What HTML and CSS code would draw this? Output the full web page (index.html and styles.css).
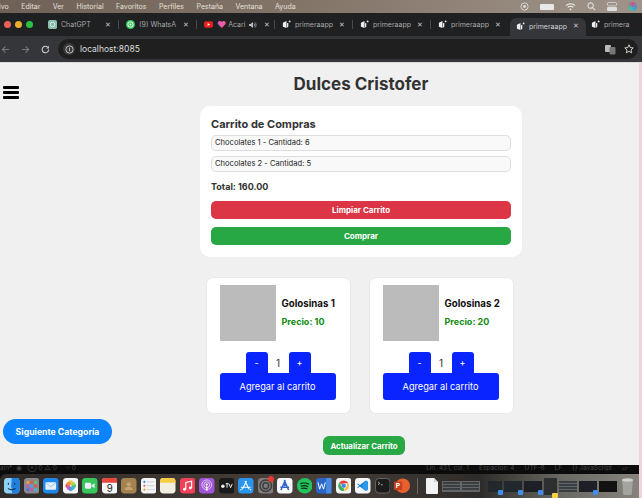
FILE: index.html
```html
<!DOCTYPE html>
<html lang="en">

<head>
    <meta charset="UTF-8">
    <meta name="viewport" content="width=device-width, initial-scale=1.0">
    <title>Dulces Cristofer</title>
    <link rel="stylesheet" href="styles.css">
</head>

<body>
    <div class="menubar">
        <div class="menu-left">
            <span class="menu-first">ivo</span><span>Editar</span><span>Ver</span><span>Historial</span><span>Favoritos</span><span>Perfiles</span><span>Pestaña</span><span>Ventana</span><span>Ayuda</span>
        </div>
        <div class="menu-right">
            <svg width="9" height="9" viewBox="0 0 10 10"><circle cx="5" cy="5" r="4" fill="none" stroke="#ddd"/><circle cx="5" cy="5" r="1.6" fill="#ddd"/></svg>
            <span class="battery"></span>
            <svg width="11" height="9" viewBox="0 0 12 10"><path d="M1 4a7 7 0 0 1 10 0M3 6a4 4 0 0 1 6 0" fill="none" stroke="#eee" stroke-width="1.2"/><circle cx="6" cy="8.3" r="1" fill="#eee"/></svg>
            <svg width="9" height="9" viewBox="0 0 10 10"><circle cx="4" cy="4" r="3" fill="none" stroke="#ddd" stroke-width="1.2"/><path d="M6.2 6.2 9 9" stroke="#ddd" stroke-width="1.2"/></svg>
            <svg width="10" height="9" viewBox="0 0 10 9"><rect x="0.5" y="0.5" width="9" height="3.4" rx="1" fill="none" stroke="#ddd" stroke-width=".8"/><rect x="0" y="5" width="10" height="4" rx="1" fill="#ddd"/></svg>
            <span class="siri"></span>
        </div>
    </div>

    <div class="tabbar">
        <div class="lights"><span class="light red"></span><span class="light yellow"></span><span class="light green"></span></div>
        <div class="tab tab-sep">
            <svg class="fav" viewBox="0 0 10 10"><rect width="10" height="10" rx="2" fill="#86bdab"/><circle cx="5" cy="5" r="2.6" fill="none" stroke="#dcebe5" stroke-width="1"/></svg>
            <span class="tab-name">ChatGPT</span><span class="tab-x">✕</span>
        </div>
        <div class="tab tab-sep">
            <svg class="fav" viewBox="0 0 10 10"><circle cx="5" cy="5" r="5" fill="#34c759"/><circle cx="5" cy="5" r="3" fill="none" stroke="#fff" stroke-width="1"/><circle cx="5" cy="5" r="1.2" fill="#fff"/></svg>
            <span class="tab-name">(9) WhatsA</span><span class="tab-x">✕</span>
        </div>
        <div class="tab tab-sep">
            <svg class="fav" viewBox="0 0 10 10"><rect y="1.5" width="10" height="7" rx="2" fill="#e8201c"/><path d="M4 3.4 6.8 5 4 6.6z" fill="#fff"/></svg>
            <span class="heart">♥</span><span class="tab-short">Acari</span>
            <svg class="speaker" width="8" height="8" viewBox="0 0 8 8"><path d="M0 3h1.5L4 1v6L1.5 5H0z" fill="#bbb"/><path d="M5 2.5a2 2 0 0 1 0 3M6 1.5a3.4 3.4 0 0 1 0 5" fill="none" stroke="#bbb" stroke-width=".7"/></svg>
            <span class="tab-x">✕</span>
        </div>
        <div class="tab tab-sep">
            <svg class="fav" viewBox="0 0 10 10"><path d="M1 3l4-2v8L1 7.5zM5.6 3.5 7 3v4.5l-1.4 1z" fill="#eee"/><circle cx="8.5" cy="1.6" r="1" fill="#eee"/></svg>
            <span class="tab-name">primeraapp</span><span class="tab-x">✕</span>
        </div>
        <div class="tab tab-sep">
            <svg class="fav" viewBox="0 0 10 10"><path d="M1 3l4-2v8L1 7.5zM5.6 3.5 7 3v4.5l-1.4 1z" fill="#eee"/><circle cx="8.5" cy="1.6" r="1" fill="#eee"/></svg>
            <span class="tab-name">primeraapp</span><span class="tab-x">✕</span>
        </div>
        <div class="tab">
            <svg class="fav" viewBox="0 0 10 10"><path d="M1 3l4-2v8L1 7.5zM5.6 3.5 7 3v4.5l-1.4 1z" fill="#eee"/><circle cx="8.5" cy="1.6" r="1" fill="#eee"/></svg>
            <span class="tab-name">primeraapp</span><span class="tab-x">✕</span>
        </div>
        <div class="tab tab-active">
            <svg class="fav" viewBox="0 0 10 10"><path d="M1 3l4-2v8L1 7.5zM5.6 3.5 7 3v4.5l-1.4 1z" fill="#eee"/><circle cx="8.5" cy="1.6" r="1" fill="#eee"/></svg>
            <span class="tab-name">primeraapp</span><span class="tab-x">✕</span>
        </div>
        <div class="tab tab-last">
            <svg class="fav" viewBox="0 0 10 10"><path d="M1 3l4-2v8L1 7.5zM5.6 3.5 7 3v4.5l-1.4 1z" fill="#eee"/><circle cx="8.5" cy="1.6" r="1" fill="#eee"/></svg>
            <span class="tab-name">primera</span>
        </div>
    </div>

    <div class="toolbar">
        <svg class="nav" width="9" height="9" viewBox="0 0 10 10"><path d="M9 5H1.5M5 1.5 1.5 5 5 8.5" fill="none" stroke="#777" stroke-width="1.2"/></svg>
        <svg class="nav" width="9" height="9" viewBox="0 0 10 10"><path d="M1 5h7.5M5 1.5 8.5 5 5 8.5" fill="none" stroke="#777" stroke-width="1.2"/></svg>
        <svg class="nav" width="9" height="9" viewBox="0 0 10 10"><path d="M8.5 5a3.6 3.6 0 1 1-1-2.5" fill="none" stroke="#ccc" stroke-width="1.2"/><path d="M8.8 0.8v3h-3z" fill="#ccc"/></svg>
        <div class="address">
            <span class="addr-info"><svg width="9" height="9" viewBox="0 0 10 10"><circle cx="5" cy="5" r="4" fill="none" stroke="#ccc"/><path d="M5 3v4" stroke="#ccc"/></svg></span>
            <span class="addr-url">localhost:8085</span>
            <svg class="addr-translate" width="11" height="11" viewBox="0 0 11 11"><rect x="0" y="1" width="6" height="7" rx="1" fill="#bbb"/><rect x="4.5" y="3" width="6" height="7.5" rx="1" fill="#777"/></svg>
            <svg width="10" height="10" viewBox="0 0 12 12"><path d="M6 1l1.5 3.3 3.6.4-2.7 2.4.8 3.5L6 8.8 2.8 10.6l.8-3.5L.9 4.7l3.6-.4z" fill="none" stroke="#ddd" stroke-width="1.1"/></svg>
        </div>
    </div>

    <div class="page">
        <button class="hamburger" aria-label="Menu"><span></span><span></span><span></span></button>

        <main class="content">
            <h1 class="site-title">Dulces Cristofer</h1>

            <section class="cart">
                <h2 class="cart-title">Carrito de Compras</h2>
                <div class="cart-item">Chocolates 1 - Cantidad: 6</div>
                <div class="cart-item">Chocolates 2 - Cantidad: 5</div>
                <p class="cart-total">Total: 160.00</p>
                <button class="btn-wide btn-red">Limpiar Carrito</button>
                <button class="btn-wide btn-green">Comprar</button>
            </section>

            <section class="products">
                <article class="product">
                    <div class="product-top">
                        <div class="product-img"></div>
                        <div>
                            <h3 class="product-name">Golosinas 1</h3>
                            <p class="product-price">Precio: 10</p>
                        </div>
                    </div>
                    <div class="qty">
                        <button class="qty-btn">-</button><span class="qty-val">1</span><button class="qty-btn">+</button>
                    </div>
                    <button class="add-btn">Agregar al carrito</button>
                </article>
                <article class="product">
                    <div class="product-top">
                        <div class="product-img"></div>
                        <div>
                            <h3 class="product-name">Golosinas 2</h3>
                            <p class="product-price">Precio: 20</p>
                        </div>
                    </div>
                    <div class="qty">
                        <button class="qty-btn">-</button><span class="qty-val">1</span><button class="qty-btn">+</button>
                    </div>
                    <button class="add-btn">Agregar al carrito</button>
                </article>
            </section>

            <button class="update-btn">Actualizar Carrito</button>
        </main>

        <button class="next-btn">Siguiente Categoría</button>
    </div>

    <div class="statusbar">
        <span class="status-left">ain* &nbsp;◉ &nbsp; ⊗ 0 △ 0 &nbsp; &nbsp; ⑂ 0</span>
        <span class="status-right"><span>Lín. 431, col. 1</span><span>Espacios: 4</span><span>UTF-8</span><span>LF</span><span>{} JavaScript</span><span>▱</span></span>
    </div>

    <div class="dock">
        <svg class="app on" viewBox="0 0 16 16"><rect width="16" height="16" rx="3.5" fill="#8fd0f5"/><path d="M8 0h4.500A3.500 3.500 0 0 1 16 3.500v9a3.500 3.500 0 0 1-3.500 3.500H8.500Q6.500 8 8 0z" fill="#1f7fe0"/><path d="M4.500 5v2M11 5v2M4 11q4 2.500 8 0" fill="none" stroke="#123" stroke-width="1"/></svg>
        <svg class="app" viewBox="0 0 16 16"><rect width="16" height="16" rx="3.500" fill="#8b8b8b"/><rect x="2.500" y="3" width="3" height="3" fill="#e8a23c"/><rect x="6.500" y="3" width="3" height="3" fill="#e0584c"/><rect x="10.500" y="3" width="3" height="3" fill="#5cc46a"/><rect x="2.500" y="6.800" width="3" height="3" fill="#b65fd0"/><rect x="6.500" y="6.800" width="3" height="3" fill="#4a9fe8"/><rect x="10.500" y="6.800" width="3" height="3" fill="#e0584c"/><rect x="2.500" y="10.600" width="3" height="3" fill="#4a6fe8"/><rect x="6.500" y="10.600" width="3" height="3" fill="#d04fa8"/><rect x="10.500" y="10.600" width="3" height="3" fill="#3cb8c8"/></svg>
        <svg class="app" viewBox="0 0 16 16"><rect width="16" height="16" rx="3.500" fill="#1e88ea"/><rect x="2.500" y="4.500" width="11" height="7.500" rx="1" fill="#e6f0fa"/><path d="M2.800 5 8 9l5.200-4" fill="none" stroke="#8ab4dc" stroke-width=".8"/></svg>
        <svg class="app" viewBox="0 0 16 16"><rect width="16" height="16" rx="3.500" fill="#f5f5f5"/><circle cx="8" cy="4.800" r="2.400" fill="#f5c23c"/><circle cx="11.200" cy="8" r="2.400" fill="#5cc46a"/><circle cx="8" cy="11.200" r="2.400" fill="#4a9fe8"/><circle cx="4.800" cy="8" r="2.400" fill="#ee5a4f"/><circle cx="10.200" cy="5.800" r="2" fill="#b4d24c"/><circle cx="5.800" cy="5.800" r="2" fill="#f08a3c"/><circle cx="5.800" cy="10.200" r="2" fill="#b65fd0"/><circle cx="10.200" cy="10.200" r="2" fill="#3cb8c8"/></svg>
        <svg class="app" viewBox="0 0 16 16"><rect width="16" height="16" rx="3.500" fill="#36c659"/><rect x="3" y="5" width="6.500" height="6" rx="1.200" fill="#eef"/><path d="M10 7.500 13 5.500v5L10 8.500z" fill="#eef"/></svg>
        <svg class="app" viewBox="0 0 16 16"><rect width="16" height="16" rx="3.500" fill="#f6f6f6"/><path d="M0 5V3.500A3.500 3.500 0 0 1 3.500 0h9A3.500 3.500 0 0 1 16 3.500V5z" fill="#e8463c"/><text x="8" y="14.300" text-anchor="middle" class="cal-num">9</text></svg>
        <svg class="app" viewBox="0 0 16 16"><rect width="16" height="16" rx="3.500" fill="#a5834f"/><circle cx="8" cy="6.500" r="2.200" fill="#c4a472"/><path d="M4 12.500a4 3.500 0 0 1 8 0z" fill="#c4a472"/></svg>
        <svg class="app" viewBox="0 0 16 16"><rect width="16" height="16" rx="3.500" fill="#f5f5f5"/><circle cx="3.500" cy="4" r="1.100" fill="#3a86e8"/><circle cx="3.500" cy="8" r="1.100" fill="#e85c4a"/><circle cx="3.500" cy="12" r="1.100" fill="#f0a030"/><path d="M6 4h8M6 8h8M6 12h8" stroke="#c4c4c4" stroke-width=".8"/></svg>
        <svg class="app on" viewBox="0 0 16 16"><rect width="16" height="16" rx="3.500" fill="#f3efe0"/><path d="M0 5V3.500A3.500 3.500 0 0 1 3.500 0h9A3.500 3.500 0 0 1 16 3.500V5z" fill="#f6cd45"/></svg>
        <svg class="app" viewBox="0 0 16 16"><rect width="16" height="16" rx="3.500" fill="#f2405a"/><path d="M6 11.500V4.500l6-1.300v7" fill="none" stroke="#fff" stroke-width="1.200"/><circle cx="4.700" cy="11.600" r="1.500" fill="#fff"/><circle cx="10.700" cy="10.400" r="1.500" fill="#fff"/></svg>
        <svg class="app" viewBox="0 0 16 16"><rect width="16" height="16" rx="3.500" fill="#a254d8"/><circle cx="8" cy="7" r="5" fill="none" stroke="#eadcf6" stroke-width=".9"/><circle cx="8" cy="7" r="3" fill="none" stroke="#eadcf6" stroke-width=".9"/><circle cx="8" cy="6.800" r="1.200" fill="#fff"/><rect x="7.200" y="8.500" width="1.600" height="5" rx=".8" fill="#fff"/></svg>
        <svg class="app" viewBox="0 0 16 16"><rect width="16" height="16" rx="3.500" fill="#1a1a1a"/><circle cx="4" cy="8.500" r="1.800" fill="#eee"/><path d="M7 6h3M8.300 5v5M10.300 6l1.700 4 1.700-4" fill="none" stroke="#eee" stroke-width="1"/></svg>
        <svg class="app" viewBox="0 0 16 16"><rect width="16" height="16" rx="3.500" fill="#2a95ee"/><path d="M8.800 3 4.500 11.500M7.200 3l4.300 8.500M3 9.500h10M2.500 12.500l1.200-1M13.500 12.500l-1.200-1" fill="none" stroke="#fff" stroke-width="1.100"/></svg>
        <span class="app-badged on">
            <svg class="app" viewBox="0 0 16 16"><rect width="16" height="16" rx="3.500" fill="#7d7d7d"/><circle cx="8" cy="8" r="6" fill="none" stroke="#3c3c3c" stroke-width="1.500"/><circle cx="8" cy="8" r="3" fill="none" stroke="#3c3c3c" stroke-width="1.500"/></svg>
            <span class="badge"></span>
        </span>
        <svg class="app on" viewBox="0 0 16 16"><rect width="16" height="16" rx="3.500" fill="#f8f8fb"/><path d="M8.500 2 4 12.500M7.500 2 12 12.500M3.500 9.500h9" fill="none" stroke="#3264c8" stroke-width="1.400"/><circle cx="8" cy="7" r="1.500" fill="#3264c8"/></svg>
        <svg class="app on" viewBox="0 0 16 16"><circle cx="8" cy="8" r="8" fill="#22c35a"/><path d="M3.500 5.800q4.500-1.500 9 .7M4 8.400q4-1.200 7.600.6M4.500 10.800q3.200-.9 6.200.5" fill="none" stroke="#10261a" stroke-width="1.200"/></svg>
        <svg class="app on" viewBox="0 0 16 16"><rect width="16" height="16" rx="3" fill="#2a66c8"/><path d="M2 4.500l1.800 7L5.800 6l2 5.500 1.800-7" fill="none" stroke="#fff" stroke-width="1"/><rect x="10.500" y="0" width="5.500" height="16" fill="#4a8ae0"/></svg>
        <svg class="app on" viewBox="0 0 16 16"><rect width="16" height="16" rx="3.500" fill="#f4f4f4"/><path d="M8 2.500a5.500 5.500 0 0 1 4.800 2.800H8A2.700 2.700 0 0 0 5.600 7L3.500 4.600A5.500 5.500 0 0 1 8 2.500z" fill="#e5443a"/><path d="M12.800 5.300A5.500 5.500 0 0 1 8 13.500l2.400-4.100a2.700 2.700 0 0 0 0-4.100z" fill="#f5c23c"/><path d="M3.500 4.600 5.800 9A2.700 2.700 0 0 0 8.600 10.700L8 13.500A5.500 5.500 0 0 1 3.500 4.600z" fill="#3fae55"/><circle cx="8" cy="8" r="2.200" fill="#4285f4"/></svg>
        <svg class="app on" viewBox="0 0 16 16"><rect width="16" height="16" rx="3.500" fill="#f6f7f9"/><path d="M11 2.500v11L5 8.800l-2 1.600-.8-.6L4.200 8 2.200 6.200l.8-.6 2 1.600z" fill="#1c80d0"/><path d="M11 2.500 13.500 3.700v8.600L11 13.500 7 8z" fill="#2a9aec"/></svg>
        <svg class="app on" viewBox="0 0 16 16"><rect x=".5" y=".5" width="15" height="15" rx="3.500" fill="#1b1b1b" stroke="#777" stroke-width=".8"/><path d="M3 4l2 1.500L3 7M6 7h2" fill="none" stroke="#ccc" stroke-width=".8"/></svg>
        <svg class="app on" viewBox="0 0 16 16"><circle cx="9" cy="8" r="7.500" fill="#e8602e"/><rect x="0" y="3.500" width="8.500" height="9" rx="1" fill="#c8401e"/><text x="4.200" y="10.800" text-anchor="middle" class="ppt-letter">P</text></svg>
        <span class="dock-sep"></span>
        <svg class="app-doc" viewBox="0 0 12 16"><path d="M0 1a1 1 0 0 1 1-1h7l4 4v11a1 1 0 0 1-1 1H1a1 1 0 0 1-1-1z" fill="#f2f2f2"/><path d="M8 0v4h4z" fill="#cfcfcf"/></svg>
        <div class="thumbs">
            <span class="thumb thumb-lines thumb-wide"></span>
            <span class="thumb thumb-lines thumb-wide thumb-joined"></span>
            <span class="thumb thumb-dim thumb-a"><span class="mini-badge"></span></span>
            <span class="thumb thumb-dim thumb-b"><span class="mini-badge"></span></span>
            <span class="thumb thumb-b"><span class="mini-badge"></span></span>
            <span class="thumb thumb-tall"><span class="mini-badge mini-note"></span></span>
            <span class="thumb thumb-lines thumb-b"></span>
            <span class="thumb thumb-b"><span class="mini-badge"></span></span>
            <span class="thumb thumb-black thumb-b"></span>
        </div>
        <svg class="trash" viewBox="0 0 13 17"><path d="M1 2h11l-1.200 14a1 1 0 0 1-1 1H3.200a1 1 0 0 1-1-1z" fill="#a3a3a0"/><ellipse cx="6.500" cy="2" rx="5.500" ry="1.700" fill="#cfcfcc"/></svg>
    </div>
</body>

</html>
```

FILE: styles.css
```css
* {
    box-sizing: border-box;
}

html,
body {
    margin: 0;
    padding: 0;
    height: 100%;
    overflow: hidden;
}

body {
    width: 642px;
    height: 498px;
    display: flex;
    flex-direction: column;
    font-family: Inter, "Liberation Sans", sans-serif;
    background-color: #0c0c0c;
    position: relative;
}

button {
    font-family: inherit;
    border: none;
    cursor: pointer;
}

/* mac menu bar */
.menubar {
    height: 13px;
    display: flex;
    justify-content: space-between;
    align-items: center;
    background: linear-gradient(90deg, #6f6157, #85766a 50%, #a0948a);
    color: #e4e0db;
    font-size: 7px;
    flex-shrink: 0;
}

.menu-left {
    display: flex;
    gap: 12.5px;
}

.menu-first {
    margin-left: -1px;
}

.menu-right {
    display: flex;
    align-items: center;
    gap: 11px;
    padding-right: 5px;
}

.battery {
    width: 14px;
    height: 6px;
    background: #e8e8e8;
    border-radius: 1px;
}

.siri {
    width: 9px;
    height: 9px;
    border-radius: 50%;
    background: conic-gradient(#d2508a, #3fa0d8, #42c0a0, #d2508a);
}

/* browser */
.tabbar {
    height: 23px;
    background-color: #1f2022;
    display: flex;
    align-items: center;
    padding-left: 45px;
    position: relative;
    flex-shrink: 0;
}

.lights {
    position: absolute;
    left: 4px;
    top: 8px;
    display: flex;
    gap: 4px;
}

.light {
    width: 7px;
    height: 7px;
    border-radius: 50%;
}

.red { background-color: #ec5f57; }
.yellow { background-color: #e5ae2f; }
.green { background-color: #2cc241; }

.tab {
    width: 78px;
    height: 23px;
    flex-shrink: 0;
    display: flex;
    align-items: center;
    padding: 0 3px;
    color: #a8a8a8;
    font-size: 7px;
    position: relative;
}

.tab-sep::after {
    content: "";
    position: absolute;
    right: 4px;
    top: 7px;
    width: 1px;
    height: 9px;
    background-color: #4a4a4a;
}

.tab-active {
    width: 76px;
    margin-left: -3px;
    padding-left: 6px;
    background-color: #35363a;
    border-radius: 6px 6px 0 0;
    color: #d0d0d0;
    margin-top: 6px;
    height: 20px;
    padding-bottom: 3px;
}

.tab-last {
    margin-left: 2px;
    width: 50px;
}

.fav {
    width: 9px;
    height: 9px;
    flex-shrink: 0;
    margin-right: 4px;
}

.heart {
    color: #e85ca8;
    font-size: 9px;
    margin-right: 2px;
}

.tab-name {
    width: 41px;
    white-space: nowrap;
    flex-shrink: 0;
}

.tab-short {
    width: 20px;
    flex-shrink: 0;
}

.speaker {
    flex-shrink: 0;
    margin-left: 1px;
    margin-right: 4px;
}

.tab-x {
    font-size: 6.5px;
    color: #c4c4c4;
    margin-left: 3px;
}

.toolbar {
    height: 26px;
    background-color: #35363a;
    display: flex;
    align-items: center;
    padding-left: 1px;
    flex-shrink: 0;
}

.nav {
    margin-right: 11px;
}

.address {
    flex: 1;
    height: 20px;
    margin-left: -3px;
    margin-right: 4px;
    background-color: #1f1f1f;
    border-radius: 10px;
    display: flex;
    align-items: center;
    padding: 0 4px 0 5px;
    color: #dedede;
    font-size: 8.5px;
}

.addr-info {
    width: 12px;
    height: 12px;
    border-radius: 50%;
    background-color: #3a3a3a;
    display: flex;
    align-items: center;
    justify-content: center;
    margin-right: 5px;
}

.addr-url {
    flex: 1;
}

.addr-translate {
    margin-right: 8px;
}

/* the page itself */
.page {
    height: 403px;
    flex-shrink: 0;
    background-color: #f0f0f0;
    border-top: 1px solid #dcdcdc;
    border-right: 3px solid #efd3e2;
    position: relative;
}

.hamburger {
    position: absolute;
    left: 3px;
    top: 23px;
    width: 16px;
    height: 13px;
    padding: 0;
    background: none;
    display: flex;
    flex-direction: column;
    justify-content: space-between;
}

.hamburger span {
    display: block;
    height: 3px;
    background-color: #000;
    border-radius: 1px;
}

.content {
    padding-left: 83px;
    display: flex;
    flex-direction: column;
    align-items: center;
}

.site-title {
    margin: 10px 0 11px;
    font-size: 17px;
    line-height: 22px;
    font-weight: 700;
    color: #333;
}

.cart {
    width: 322px;
    height: 151px;
    background-color: #fff;
    border-radius: 10px;
    padding: 11px 11px 0;
    display: flex;
    flex-direction: column;
}

.cart-title {
    margin: 0 0 4px;
    font-size: 11px;
    line-height: 14px;
    font-weight: 700;
    color: #333;
}

.cart-item {
    height: 16px;
    margin-bottom: 5px;
    background-color: #f9f9f9;
    border: 1px solid #ddd;
    border-radius: 5px;
    padding-left: 3px;
    font-size: 7.6px;
    line-height: 14px;
    color: #222;
}

.cart-total {
    margin: 4px 0 8px;
    font-size: 9px;
    line-height: 12px;
    font-weight: 700;
    color: #333;
}

.btn-wide {
    height: 18px;
    margin-bottom: 8px;
    border-radius: 5px;
    color: #fff;
    font-size: 8px;
    font-weight: 700;
    padding: 0;
}

.btn-red { background-color: #dc3545; }
.btn-green { background-color: #28a745; }

.products {
    margin-top: 20px;
    margin-left: -3px;
    display: flex;
    gap: 18px;
}

.product {
    width: 145px;
    height: 137px;
    background-color: #fff;
    border-radius: 7px;
    border: 1px solid #e8e8e8;
    padding: 7px 13px 0;
}

.product-top {
    display: flex;
    align-items: center;
    gap: 6px;
}

.product-img {
    width: 56px;
    height: 56px;
    background-color: #bbb;
    flex-shrink: 0;
}

.product-name {
    margin: 0 0 6px;
    font-size: 9.7px;
    line-height: 12px;
    font-weight: 700;
    color: #111;
    white-space: nowrap;
}

.product-price {
    margin: 0;
    font-size: 9px;
    line-height: 12px;
    font-weight: 700;
    color: #0f8a0f;
    white-space: nowrap;
}

.qty {
    margin-top: 11px;
    display: flex;
    justify-content: center;
    align-items: center;
    height: 21px;
}

.qty-btn {
    width: 22px;
    height: 21px;
    background-color: #0a24ff;
    color: #fff;
    border-radius: 3px 3px 0 0;
    font-size: 9px;
    padding: 0;
}

.qty-val {
    width: 21px;
    text-align: center;
    font-size: 10px;
    color: #333;
}

.add-btn {
    display: block;
    width: 116px;
    height: 27px;
    background-color: #0a24ff;
    color: #fff;
    border-radius: 3px;
    font-size: 9.2px;
    padding: 0;
}

.update-btn {
    margin-top: 22px;
    margin-left: 6px;
    width: 82px;
    height: 19px;
    background-color: #28a745;
    color: #fff;
    border-radius: 6px;
    font-size: 7.8px;
    font-weight: 700;
    padding: 0;
}

.next-btn {
    position: absolute;
    left: 3px;
    top: 356px;
    width: 109px;
    height: 25px;
    background-color: #0d84ff;
    color: #fff;
    border-radius: 13px;
    font-size: 8.7px;
    font-weight: 700;
    padding: 0;
}

/* bottom of the desktop */
.statusbar {
    height: 9px;
    background-color: #0c0c0c;
    color: #444;
    font-size: 6.5px;
    line-height: 7px;
    display: flex;
    justify-content: space-between;
    padding-right: 12px;
    border-right: 3px solid #efd3e2;
    flex-shrink: 0;
}

.status-right {
    display: flex;
    gap: 10px;
}

.dock {
    flex: 1;
    display: flex;
    align-items: center;
    gap: 4px;
    padding: 0 6px 0 4px;
    background: linear-gradient(90deg, #2f2c2a, #483f39 48%, #2e2c2a 75%, #6b6963 88%, #85837c);
    border-right: 3px solid #efd3e2;
    border-radius: 6px 0 0 0;
}

.app {
    width: 15.5px;
    height: 15.5px;
    flex-shrink: 0;
    display: block;
}

.app-badged {
    position: relative;
    flex-shrink: 0;
    width: 15.5px;
    height: 15.5px;
}

.badge {
    position: absolute;
    right: -1px;
    top: -2px;
    width: 6px;
    height: 6px;
    background-color: #e8392e;
    border-radius: 50%;
}

.cal-num {
    font-family: Inter, "Liberation Sans", sans-serif;
    font-size: 10px;
    fill: #222;
}

.ppt-letter {
    font-family: Inter, "Liberation Sans", sans-serif;
    font-size: 7px;
    font-weight: 700;
    fill: #fff;
}

.dock-sep {
    width: 1px;
    height: 16px;
    background-color: #666;
    margin: 0 4px 0 3px;
    flex-shrink: 0;
}

.app-doc {
    width: 12px;
    height: 16px;
    flex-shrink: 0;
}

.thumbs {
    display: flex;
    align-items: center;
    gap: 2px;
}

.thumb {
    position: relative;
    width: 17px;
    height: 11px;
    background-color: #1d2125;
    flex-shrink: 0;
}

.thumb-wide {
    width: 19px;
    background-color: #3b3e40;
    border: 1px solid #666;
}

.thumb-joined {
    margin-left: -2px;
}

.thumb-lines {
    background-image: repeating-linear-gradient(#3b3e40 0 2px, #63676a 2px 3px);
}

.thumb-dim {
    background-color: #23282d;
}

.thumb-a {
    width: 14px;
    margin-left: 6px;
}

.thumb-b {
    width: 18px;
}

.thumb-tall {
    width: 13px;
    height: 17px;
    background-color: #2d2f30;
}

.thumb-black {
    background-color: #121212;
}

.mini-badge {
    position: absolute;
    right: -1px;
    bottom: -3px;
    width: 5px;
    height: 5px;
    background-color: #3f8ef0;
    border-radius: 1px;
}

.mini-note {
    background-color: #f6cd45;
    width: 6px;
}

.trash {
    width: 13px;
    height: 17px;
    margin-left: auto;
    flex-shrink: 0;
}
```
